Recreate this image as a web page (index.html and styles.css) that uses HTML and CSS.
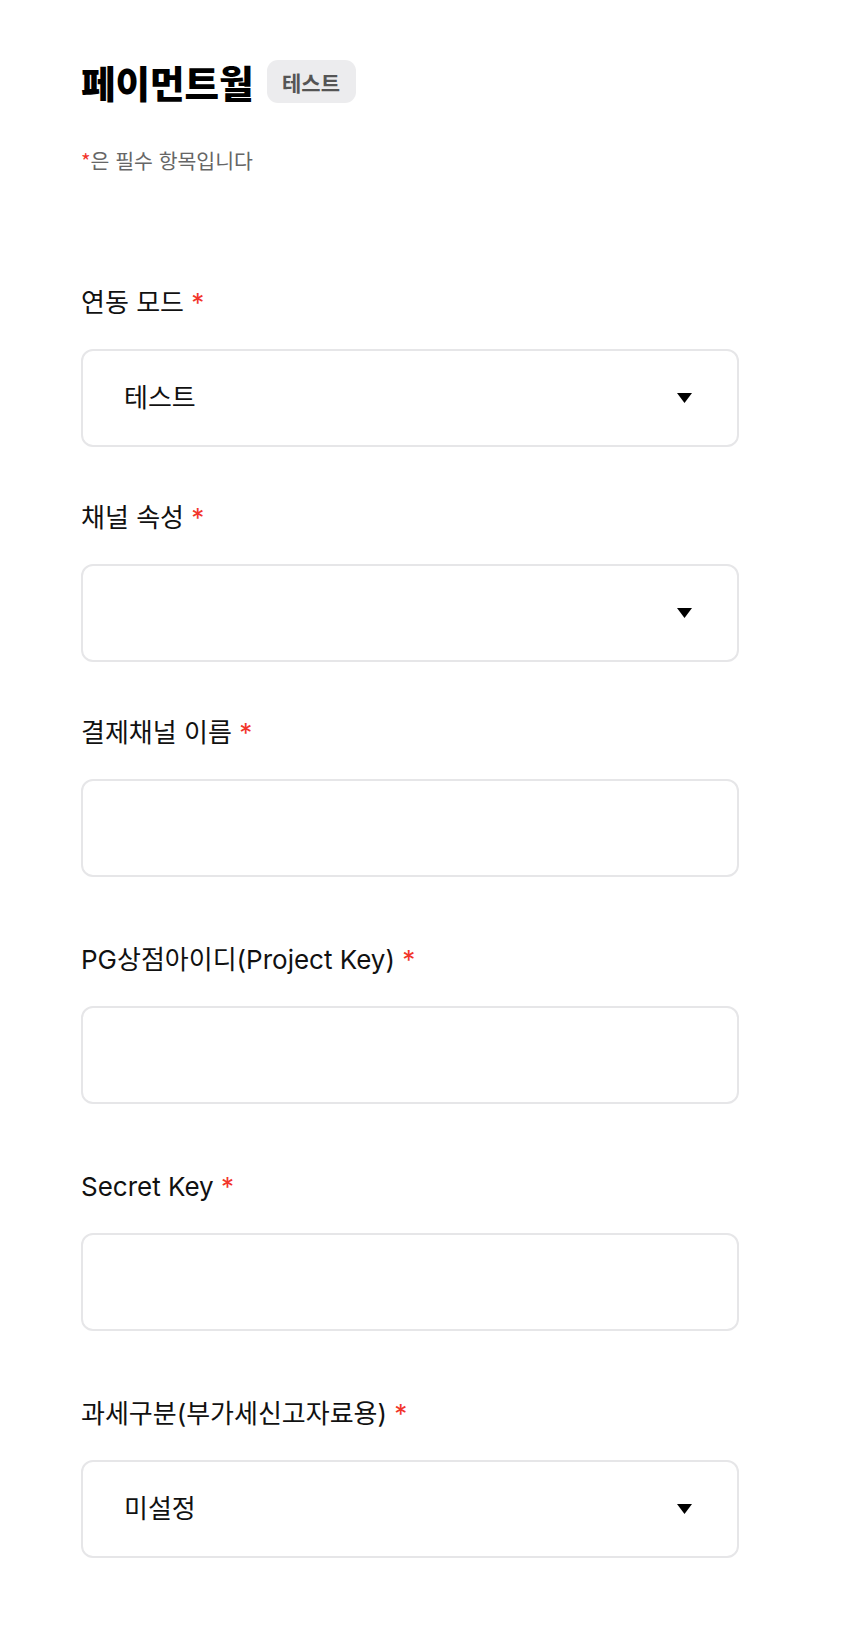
FILE: index.html
```html
<!DOCTYPE html>
<html lang="ko">
<head>
<meta charset="utf-8">
<title>페이먼트월</title>
<link rel="stylesheet" href="styles.css">
</head>
<body>
<div class="page">
  <header class="header">
    <h1 class="title">페이먼트월</h1>
    <span class="badge">테스트</span>
  </header>
  <p class="note"><span class="req">*</span>은 필수 항목입니다</p>

  <form class="form">
    <div class="field field-select">
      <label class="label">연동 모드 <span class="req">*</span></label>
      <div class="box select">
        <span class="value">테스트</span>
        <svg class="arrow" width="15" height="10" viewBox="0 0 15 10"><polygon points="0,0 15,0 7.5,10" fill="#000"/></svg>
      </div>
    </div>

    <div class="field field-select">
      <label class="label">채널 속성 <span class="req">*</span></label>
      <div class="box select">
        <span class="value"></span>
        <svg class="arrow" width="15" height="10" viewBox="0 0 15 10"><polygon points="0,0 15,0 7.5,10" fill="#000"/></svg>
      </div>
    </div>

    <div class="field field-input">
      <label class="label">결제채널 이름 <span class="req">*</span></label>
      <input class="box input" type="text">
    </div>

    <div class="field field-input">
      <label class="label">PG상점아이디(Project Key) <span class="req">*</span></label>
      <input class="box input" type="text">
    </div>

    <div class="field field-input">
      <label class="label">Secret Key <span class="req">*</span></label>
      <input class="box input" type="text">
    </div>

    <div class="field field-select">
      <label class="label">과세구분(부가세신고자료용) <span class="req">*</span></label>
      <div class="box select">
        <span class="value">미설정</span>
        <svg class="arrow" width="15" height="10" viewBox="0 0 15 10"><polygon points="0,0 15,0 7.5,10" fill="#000"/></svg>
      </div>
    </div>
  </form>
</div>
</body>
</html>
```

FILE: styles.css
```css
* { box-sizing: border-box; }

html, body {
  margin: 0;
  padding: 0;
  background: #ffffff;
}

body {
  font-family: "Inter", "Noto Sans CJK KR", sans-serif;
  color: #111111;
}

.page {
  width: 658px;
  margin-left: 81px;
  padding-top: 60px;
  padding-bottom: 60px;
}

.header {
  display: flex;
  align-items: center;
  gap: 13px;
  height: 43px;
}

.title {
  margin: 0;
  font-family: "Noto Sans CJK KR", sans-serif;
  font-weight: 900;
  font-size: 37.5px;
  line-height: 43px;
  color: #000;
}

.badge {
  display: flex;
  align-items: center;
  justify-content: center;
  width: 89px;
  height: 43px;
  border-radius: 11px;
  background: #ececee;
  color: #555555;
  font-family: "Noto Sans CJK KR", sans-serif;
  font-weight: 700;
  font-size: 21px;
}

.note {
  margin: 45px 0 0 0;
  font-family: "Noto Sans CJK KR", sans-serif;
  font-size: 20.5px;
  line-height: 24px;
  color: #666666;
}

.req {
  color: #f2352b;
}

.form {
  display: flex;
  flex-direction: column;
  margin-top: 115px;
}

.field {
  display: flex;
  flex-direction: column;
  gap: 30px;
}

.field-select { margin-bottom: 55px; }
.field-input { margin-bottom: 67px; }

.label {
  font-size: 26px;
  line-height: 32px;
  color: #111111;
}

.box {
  width: 100%;
  height: 98px;
  border: 2px solid #e6e6e8;
  border-radius: 12px;
  background: #fff;
}

.select {
  display: flex;
  align-items: center;
  justify-content: space-between;
  padding: 0 45px 0 41px;
}

.value {
  font-size: 26px;
  line-height: 32px;
  color: #111111;
}

.arrow {
  display: block;
  flex: none;
}

.input {
  display: block;
  padding: 0 41px;
  font-family: inherit;
  font-size: 26px;
  outline: none;
}
```
